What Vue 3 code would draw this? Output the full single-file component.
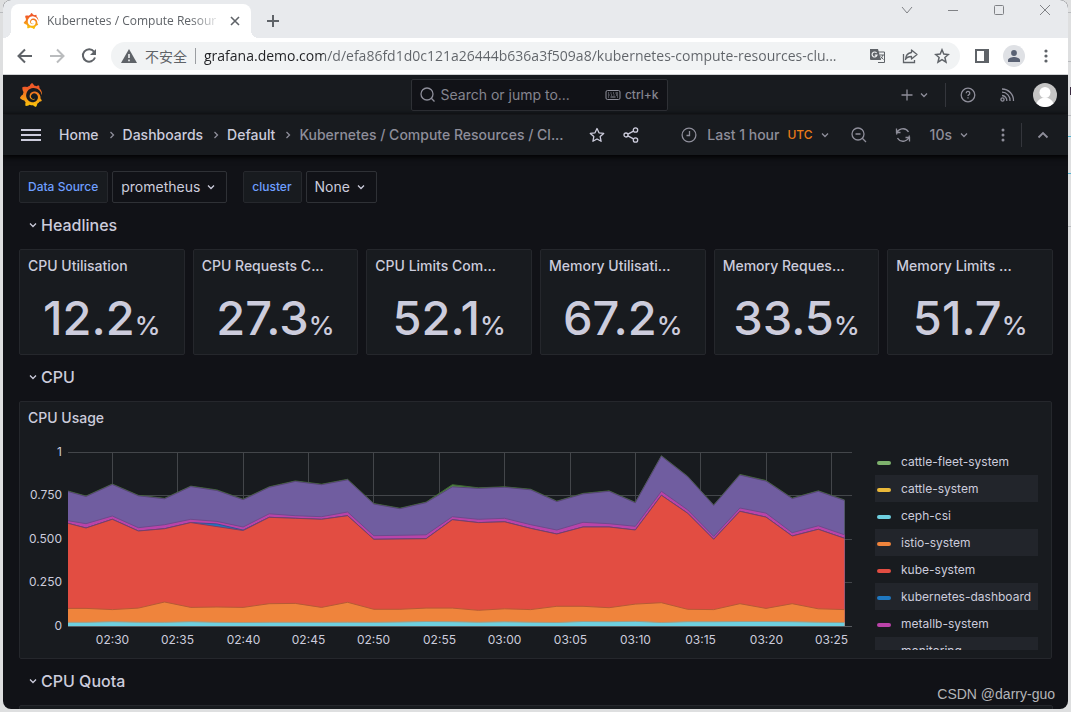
<script setup>
const logo =
  'M23.02 10.59a8.578 8.578 0 0 0-.862-3.034 8.911 8.911 0 0 0-1.789-2.445c.337-1.342-.413-2.505-.413-2.505-1.292-.08-2.113.4-2.416.62-.052-.02-.102-.044-.154-.064-.22-.089-.446-.172-.677-.247-.231-.073-.47-.14-.711-.197a9.867 9.867 0 0 0-.875-.161C14.557.753 12.94 0 12.94 0c-1.804 1.145-2.147 2.744-2.147 2.744l-.018.093c-.098.029-.2.057-.298.088-.138.042-.275.094-.413.143-.138.055-.275.107-.41.166a8.869 8.869 0 0 0-1.557.87l-.063-.029c-2.497-.955-4.716.195-4.716.195-.203 2.658.996 4.33 1.235 4.636a11.608 11.608 0 0 0-.607 2.635C1.636 12.677.953 15.014.953 15.014c1.926 2.214 4.171 2.351 4.171 2.351.003-.002.006-.002.006-.005.285.509.615.994.986 1.446.156.19.32.371.488.548-.704 2.009.099 3.68.099 3.68 2.144.08 3.553-.937 3.849-1.173a9.784 9.784 0 0 0 3.164.501h.08l.055-.003.107-.002.103-.005.003.002c1.01 1.44 2.788 1.646 2.788 1.646 1.264-1.332 1.337-2.653 1.337-2.94v-.058c0-.02-.003-.039-.003-.06.265-.187.52-.387.758-.6a7.875 7.875 0 0 0 1.415-1.7c1.43.083 2.437-.885 2.437-.885-.236-1.49-1.085-2.216-1.264-2.354l-.018-.013-.016-.013a.217.217 0 0 1-.031-.02c.008-.092.016-.18.02-.27.011-.162.016-.323.016-.48v-.253l-.005-.098-.008-.135a1.891 1.891 0 0 0-.01-.13c-.003-.042-.008-.083-.013-.125l-.016-.124-.018-.122a6.215 6.215 0 0 0-2.032-3.73 6.015 6.015 0 0 0-3.222-1.46 6.292 6.292 0 0 0-.85-.048l-.107.002h-.063l-.044.003-.104.008a4.777 4.777 0 0 0-3.335 1.695c-.332.4-.592.84-.768 1.297a4.594 4.594 0 0 0-.312 1.817l.003.091c.005.055.007.11.013.164a3.615 3.615 0 0 0 .698 1.82 3.53 3.53 0 0 0 1.827 1.282c.33.098.66.14.971.137.039 0 .078 0 .114-.002l.063-.003c.02 0 .041-.003.062-.003.034-.002.065-.007.099-.01.007 0 .018-.003.028-.003l.031-.005.06-.008a1.18 1.18 0 0 0 .112-.02c.036-.008.072-.013.109-.024a2.634 2.634 0 0 0 .914-.415c.028-.02.056-.041.085-.065a.248.248 0 0 0 .039-.35.244.244 0 0 0-.309-.06l-.078.042c-.09.044-.184.083-.283.116a2.476 2.476 0 0 1-.475.096c-.028.003-.054.006-.083.006l-.083.002c-.026 0-.054 0-.08-.002l-.102-.006h-.012l-.024.006c-.016-.003-.031-.003-.044-.006-.031-.002-.06-.007-.091-.01a2.59 2.59 0 0 1-.724-.213 2.557 2.557 0 0 1-.667-.438 2.52 2.52 0 0 1-.805-1.475 2.306 2.306 0 0 1-.029-.444l.006-.122v-.023l.002-.031c.003-.021.003-.04.005-.06a3.163 3.163 0 0 1 1.352-2.29 3.12 3.12 0 0 1 .937-.43 2.946 2.946 0 0 1 .776-.101h.06l.07.002.045.003h.026l.07.005a4.041 4.041 0 0 1 1.635.49 3.94 3.94 0 0 1 1.602 1.662 3.77 3.77 0 0 1 .397 1.414l.005.076.003.075c.002.026.002.05.002.075 0 .024.003.052 0 .07v.065l-.002.073-.008.174a6.195 6.195 0 0 1-.08.639 5.1 5.1 0 0 1-.267.927 5.31 5.31 0 0 1-.624 1.13 5.052 5.052 0 0 1-3.237 2.014 4.82 4.82 0 0 1-.649.066l-.039.003h-.287a6.607 6.607 0 0 1-1.716-.265 6.776 6.776 0 0 1-3.4-2.274 6.75 6.75 0 0 1-.746-1.15 6.616 6.616 0 0 1-.714-2.596l-.005-.083-.002-.02v-.056l-.003-.073v-.096l-.003-.104v-.07l.003-.163c.008-.22.026-.45.054-.678a8.707 8.707 0 0 1 .28-1.355c.128-.444.286-.872.473-1.277a7.04 7.04 0 0 1 1.456-2.1 5.925 5.925 0 0 1 .953-.763c.169-.111.343-.213.524-.306.089-.05.182-.091.273-.135.047-.02.093-.042.138-.062a7.177 7.177 0 0 1 .714-.267l.145-.045c.049-.015.098-.026.148-.041.098-.029.197-.052.296-.076.049-.013.1-.02.15-.033l.15-.032.151-.028.076-.013.075-.01.153-.024c.057-.01.114-.013.171-.023l.169-.021c.036-.003.073-.008.106-.01l.073-.008.036-.003.042-.002c.057-.003.114-.008.171-.01l.086-.006h.023l.037-.003.145-.007a7.999 7.999 0 0 1 1.708.125 7.917 7.917 0 0 1 2.048.68 8.253 8.253 0 0 1 1.672 1.09l.09.077.089.078c.06.052.114.107.171.159.057.052.112.106.166.16.052.055.107.107.159.164a8.671 8.671 0 0 1 1.41 1.978c.012.026.028.052.04.078l.04.078.075.156c.023.051.05.1.07.153l.065.15a8.848 8.848 0 0 1 .45 1.34.19.19 0 0 0 .201.142.186.186 0 0 0 .172-.184c.01-.246.002-.532-.024-.856z'

const stats = [
  { title: 'CPU Utilisation', value: '12.2' },
  { title: 'CPU Requests C...', value: '27.3' },
  { title: 'CPU Limits Com...', value: '52.1' },
  { title: 'Memory Utilisati...', value: '67.2' },
  { title: 'Memory Reques...', value: '33.5' },
  { title: 'Memory Limits ...', value: '51.7' },
]

const legend = [
  { name: 'cattle-fleet-system', color: '#7eb26d' },
  { name: 'cattle-system', color: '#eab839' },
  { name: 'ceph-csi', color: '#6ed0e0' },
  { name: 'istio-system', color: '#ef843c' },
  { name: 'kube-system', color: '#e24d42' },
  { name: 'kubernetes-dashboard', color: '#1f78c1' },
  { name: 'metallb-system', color: '#ba43a9' },
  { name: 'monitoring', color: '#705da0' },
]

// Chart geometry, in viewBox units
const left = 44
const base = 186
const unit = 174
const xs = [44, 62]
for (let i = 0; i < 29; i++) xs.push(88.3 + i * 26.15)

// Stacked tops, one value for each sample
const tops = {
  monitoring: [0.773, 0.744, 0.813, 0.748, 0.731, 0.801, 0.779, 0.726, 0.797, 0.831, 0.812, 0.84, 0.701, 0.674, 0.709, 0.8, 0.791, 0.797, 0.783, 0.715, 0.759, 0.774, 0.708, 0.976, 0.858, 0.693, 0.868, 0.833, 0.732, 0.774, 0.722],
  metallb: [0.605, 0.588, 0.632, 0.565, 0.582, 0.613, 0.601, 0.569, 0.645, 0.634, 0.628, 0.655, 0.519, 0.521, 0.524, 0.628, 0.613, 0.619, 0.582, 0.552, 0.596, 0.588, 0.573, 0.774, 0.668, 0.515, 0.678, 0.649, 0.536, 0.576, 0.524],
  dashboard: [0.59, 0.563, 0.613, 0.546, 0.559, 0.594, 0.587, 0.551, 0.625, 0.619, 0.613, 0.634, 0.498, 0.5, 0.502, 0.611, 0.594, 0.599, 0.561, 0.529, 0.569, 0.569, 0.552, 0.751, 0.648, 0.498, 0.659, 0.626, 0.517, 0.556, 0.504],
  kube: [0.59, 0.563, 0.613, 0.546, 0.559, 0.594, 0.571, 0.549, 0.625, 0.619, 0.613, 0.634, 0.498, 0.5, 0.502, 0.611, 0.594, 0.599, 0.561, 0.529, 0.569, 0.569, 0.552, 0.751, 0.648, 0.498, 0.659, 0.626, 0.517, 0.556, 0.504],
  istio: [0.101, 0.101, 0.094, 0.103, 0.138, 0.107, 0.109, 0.107, 0.128, 0.13, 0.107, 0.136, 0.096, 0.096, 0.103, 0.103, 0.09, 0.099, 0.094, 0.113, 0.113, 0.105, 0.126, 0.134, 0.096, 0.094, 0.128, 0.101, 0.128, 0.099, 0.094],
  ceph: [0.021, 0.021, 0.025, 0.022, 0.021, 0.025, 0.021, 0.02, 0.021, 0.021, 0.021, 0.022, 0.021, 0.023, 0.026, 0.025, 0.022, 0.024, 0.022, 0.02, 0.026, 0.025, 0.027, 0.02, 0.025, 0.025, 0.026, 0.026, 0.025, 0.022, 0.02],
}
tops.fleet = tops.monitoring.map((v, i) => v + (i === 15 ? 0.012 : 0.003))

const layers = [
  { key: 'fleet', fill: '#508642', line: '#3f6833' },
  { key: 'monitoring', fill: '#705da0', line: '#584477' },
  { key: 'metallb', fill: '#ba43a9', line: '#6d4a8c' },
  { key: 'dashboard', fill: '#1f78c1', line: '#3c4f92' },
  { key: 'kube', fill: '#e24d42', line: '#7b3d68' },
  { key: 'istio', fill: '#ef843c', line: '#b65a35' },
  { key: 'ceph', fill: '#6ed0e0', line: '#a59a80' },
].map((l) => {
  const pts = tops[l.key].map((v, i) => `${xs[i].toFixed(1)},${(base - v * unit).toFixed(1)}`).join(' ')
  return { ...l, pts, area: `${left},${base} ${pts} ${xs[30].toFixed(1)},${base}` }
})

const yTicks = [
  { label: '1', y: 12.5 },
  { label: '0.750', y: 55.5 },
  { label: '0.500', y: 99.5 },
  { label: '0.250', y: 142.5 },
  { label: '0', y: 186.5 },
]
const xTicks = ['02:30', '02:35', '02:40', '02:45', '02:50', '02:55', '03:00', '03:05', '03:10', '03:15', '03:20', '03:25'].map(
  (label, i) => ({ label, x: Math.floor(88.3 + i * 65.4) + 0.5 }),
)
</script>

<template>
  <div class="desktop">
    <div class="window">
      <header class="tabstrip">
        <div class="tab">
          <svg class="favicon" viewBox="0 0 24 24"><path :d="logo" fill="url(#brand)" /></svg>
          <span class="tab-title">Kubernetes / Compute Resour</span>
          <button class="plain" aria-label="Close tab">
            <svg width="10" height="10" viewBox="0 0 10 10" stroke="#5f6368" stroke-width="1.6"><path d="M1 1l8 8M9 1l-8 8" /></svg>
          </button>
        </div>
        <button class="plain newtab" aria-label="New tab">
          <svg width="12" height="12" viewBox="0 0 12 12" stroke="#5f6368" stroke-width="2"><path d="M6 0v12M0 6h12" /></svg>
        </button>
        <div class="winctl">
          <button class="plain" aria-label="Search tabs"><svg width="12" height="12" viewBox="0 0 12 12"><path d="M1 3l5 6 5-6" /></svg></button>
          <button class="plain" aria-label="Minimize"><svg width="12" height="12" viewBox="0 0 12 12"><path d="M1 6.500h10" /></svg></button>
          <button class="plain" aria-label="Maximize"><svg width="12" height="12" viewBox="0 0 12 12"><rect x="1.500" y="1.500" width="9" height="9" rx="1" /></svg></button>
          <button class="plain" aria-label="Close"><svg width="12" height="12" viewBox="0 0 12 12"><path d="M1 1l10 10M11 1L1 11" /></svg></button>
        </div>
      </header>

      <div class="toolbar">
        <button class="plain" aria-label="Back">
          <svg width="16" height="16" viewBox="0 0 16 16" fill="none" stroke="#5f6368" stroke-width="2"><path d="M15 8H2M8 1.500L1.500 8 8 14.500" /></svg>
        </button>
        <button class="plain" aria-label="Forward">
          <svg width="16" height="16" viewBox="0 0 16 16" fill="none" stroke="#babcbe" stroke-width="2"><path d="M1 8h13M8 1.500L14.500 8 8 14.500" /></svg>
        </button>
        <button class="plain" aria-label="Reload">
          <svg width="16" height="16" viewBox="0 0 16 16"><path d="M13 3.600A6.200 6.200 0 1 0 14 9.500" fill="none" stroke="#5f6368" stroke-width="2" /><path d="M15 1v6H9z" fill="#5f6368" /></svg>
        </button>
        <div class="omnibox">
          <svg width="16" height="14" viewBox="0 0 16 14"><path d="M8 0l8 14H0z" fill="#5f6368" /><path d="M8 5v4M8 10.500v1.800" stroke="#f1f3f4" stroke-width="1.600" /></svg>
          <span class="insecure">不安全</span>
          <input class="url" aria-label="Address" value="grafana.demo.com/d/efa86fd1d0c121a26444b636a3f509a8/kubernetes-compute-resources-clu..." />
          <button class="plain" aria-label="Translate">
            <svg width="16" height="16" viewBox="0 0 16 16"><path d="M6 4h8.500v10.500H8" fill="none" stroke="#5f6368" /><path d="M0 1h8l3 11H1a1 1 0 0 1-1-1z" fill="#5f6368" /><path d="M6.600 5A2.500 2.500 0 1 0 7 7.200H4.800" fill="none" stroke="#f1f3f4" stroke-width="1.200" /><path d="M9.500 7h4.500M12.800 7c-.4 2-1.500 3.300-2.600 4.200M10.500 8.500l3 3" fill="none" stroke="#5f6368" /></svg>
          </button>
          <button class="plain" aria-label="Share page">
            <svg width="16" height="16" viewBox="0 0 16 16" fill="none" stroke="#5f6368" stroke-width="1.300"><path d="M1.500 6v8.500h11V12" /><path d="M9.500 2l5.500 4.500L9.500 11V8.500c-3 0-5 .8-6 3 .2-3.500 2-6.500 6-7z" stroke-linejoin="round" /></svg>
          </button>
          <button class="plain" aria-label="Bookmark">
            <svg width="16" height="16" viewBox="0 0 16 16" fill="none" stroke="#5f6368" stroke-width="1.500"><path d="M8 1.800l1.800 4.300 4.600.4-3.500 3 1.100 4.600L8 11.700 4 14.100l1.100-4.600-3.500-3 4.600-.4z" /></svg>
          </button>
        </div>
        <button class="plain panelbtn" aria-label="Side panel">
          <svg width="14" height="14" viewBox="0 0 14 14"><path d="M0 0h14v14H0zM2 2v10h7V2z" fill="#5f6368" fill-rule="evenodd" /></svg>
        </button>
        <button class="plain profile" aria-label="Profile">
          <svg width="12" height="12" viewBox="0 0 12 12" fill="#5a6274"><circle cx="6" cy="3" r="2.900" /><path d="M0 12V10c0-2 4-3 6-3s6 1 6 3v2z" /></svg>
        </button>
        <button class="plain" aria-label="Browser menu">
          <svg width="4" height="14" viewBox="0 0 4 14" fill="#5f6368"><circle cx="2" cy="2" r="1.600" /><circle cx="2" cy="7" r="1.600" /><circle cx="2" cy="12" r="1.600" /></svg>
        </button>
      </div>

      <div class="app">
        <div class="topbar">
          <a href="#" class="brand" aria-label="Grafana">
            <svg width="24" height="24" viewBox="0 0 24 24">
              <defs><linearGradient id="brand" x1="0" y1="0" x2="0" y2="1"><stop offset="0.200" stop-color="#f05a28" /><stop offset="1" stop-color="#fbca0a" /></linearGradient></defs>
              <path :d="logo" fill="url(#brand)" />
            </svg>
          </a>
          <div class="search">
            <svg class="ic" width="16" height="16" viewBox="0 0 16 16"><circle cx="7" cy="7" r="6" /><path d="M11.300 11.300L14.500 14.500" /></svg>
            <input aria-label="Search" placeholder="Search or jump to..." />
            <svg class="ic kbd" width="16" height="16" viewBox="0 0 16 16"><rect x="1" y="3.500" width="14" height="9" rx="1.500" /><path d="M3 6h1M5.500 6h1M8 6h1M10.500 6h2.500M3 8h1.500M6 8h1M8.500 8h1M11 8h2M3 10h1M5.500 10h5M12 10h1" /></svg>
            <kbd>ctrl+k</kbd>
          </div>
          <div class="top-actions">
            <button class="plain add" aria-label="New">
              <svg class="ic" width="12" height="12" viewBox="0 0 12 12"><path d="M6 0.500v11M0.500 6h11" /></svg>
              <svg class="ic" width="8" height="6" viewBox="0 0 8 6"><path d="M1 1.500l3 3 3-3" /></svg>
            </button>
            <i class="divider"></i>
            <button class="plain help" aria-label="Help">
              <svg class="ic" width="16" height="16" viewBox="0 0 16 16"><circle cx="8" cy="8" r="6.800" /><path d="M6.200 6.200a1.800 1.800 0 1 1 2.500 1.700c-.5.200-.7.500-.7 1.100M8 10.300v1.300" /></svg>
            </button>
            <button class="plain news" aria-label="News">
              <svg class="ic" width="16" height="16" viewBox="0 0 16 16"><circle cx="3.500" cy="12.500" r="1.600" /><path d="M3 8.500a5 5 0 0 1 4.800 5.500M3 5.200A8 8 0 0 1 11 14M3 2a11.500 11.500 0 0 1 11.500 12" /></svg>
            </button>
            <button class="plain avatar" aria-label="Account">
              <svg width="24" height="24" viewBox="0 0 24 24"><circle cx="12" cy="12" r="12" fill="#c5c5c5" /><circle cx="12" cy="9.500" r="5.500" fill="#fff" /><path d="M3.500 20.500c1-3.500 4-5 6-5.500h5c2 .5 5 2 6 5.500A12 12 0 0 1 3.500 20.500z" fill="#fff" /></svg>
            </button>
          </div>
        </div>

        <div class="navbar">
          <button class="plain" aria-label="Menu">
            <svg width="20" height="12" viewBox="0 0 20 12" fill="#ccccdc"><path d="M0 0h20v2H0zM0 5h20v2H0zM0 10h20v2H0z" /></svg>
          </button>
          <nav class="crumbs">
            <template v-for="c in ['Home', 'Dashboards', 'Default']" :key="c">
              <a href="#">{{ c }}</a>
              <svg class="ic" width="6" height="8" viewBox="0 0 6 8"><path d="M1.500 1l3 3-3 3" /></svg>
            </template>
            <span class="current">Kubernetes / Compute Resources / Cl...</span>
          </nav>
          <button class="plain light star" aria-label="Favorite">
            <svg class="ic" width="16" height="16" viewBox="0 0 16 16"><path d="M8 1.500l2 4.300 4.700.600-3.500 3.200.900 4.700L8 12l-4.100 2.300.900-4.700L1.300 6.400 6 5.800z" stroke-linejoin="round" /></svg>
          </button>
          <button class="plain light" aria-label="Share">
            <svg class="ic" width="16" height="16" viewBox="0 0 16 16"><circle cx="3" cy="8" r="2" /><circle cx="12.500" cy="3" r="2.200" /><circle cx="12.500" cy="13" r="2.200" /><path d="M4.900 7.100l5.600-3M4.900 8.900l5.600 3" /></svg>
          </button>
          <div class="controls">
            <button class="plain range">
              <svg class="ic" width="16" height="16" viewBox="0 0 16 16"><circle cx="8" cy="8" r="6.900" /><path d="M8.500 4v4.500H5.500" /></svg>
              <span class="gap">Last 1 hour</span><span class="utc">UTC</span>
              <svg class="ic" width="8" height="6" viewBox="0 0 8 6"><path d="M1 1.500l3 3 3-3" /></svg>
            </button>
            <button class="plain" aria-label="Zoom out">
              <svg class="ic" width="16" height="16" viewBox="0 0 16 16"><circle cx="7" cy="7" r="6" /><path d="M4.500 7h5M11.300 11.300L15 15" /></svg>
            </button>
            <button class="plain refresh" aria-label="Refresh">
              <svg class="ic" width="16" height="16" viewBox="0 0 16 16"><path d="M1.500 1.500v4H5.500M1.600 7.500A6.400 6.400 0 0 1 13.500 5M14.500 14.500v-4H10.500M14.400 8.500A6.400 6.400 0 0 1 2.500 11M1.700 5.300A6.400 6.400 0 0 1 4 3" /></svg>
            </button>
            <button class="plain interval">10s
              <svg class="ic" width="8" height="6" viewBox="0 0 8 6"><path d="M1 1.500l3 3 3-3" /></svg>
            </button>
            <button class="plain" aria-label="More">
              <svg width="4" height="14" viewBox="0 0 4 14" fill="#8e8e9a"><circle cx="2" cy="2" r="1.500" /><circle cx="2" cy="7" r="1.500" /><circle cx="2" cy="12" r="1.500" /></svg>
            </button>
            <i class="divider"></i>
            <button class="plain" aria-label="Collapse toolbar">
              <svg class="ic up" width="12" height="8" viewBox="0 0 12 8"><path d="M1.500 6.500L6 2l4.500 4.500" /></svg>
            </button>
          </div>
        </div>

        <main>
          <div class="variables">
            <label for="ds">Data Source</label>
            <div class="pick">
              <select id="ds"><option>prometheus</option></select>
              <svg class="ic" width="8" height="6" viewBox="0 0 8 6"><path d="M1 1.500l3 3 3-3" /></svg>
            </div>
            <label for="cl" class="second">cluster</label>
            <div class="pick">
              <select id="cl"><option>None</option></select>
              <svg class="ic" width="8" height="6" viewBox="0 0 8 6"><path d="M1 1.500l3 3 3-3" /></svg>
            </div>
          </div>

          <button class="plain row"><svg class="ic" width="8" height="6" viewBox="0 0 8 6"><path d="M1 1.500l3 3 3-3" /></svg>Headlines</button>
          <section class="stats">
            <article v-for="s in stats" :key="s.title" class="panel stat">
              <h2>{{ s.title }}</h2>
              <p>{{ s.value }}<small>%</small></p>
            </article>
          </section>

          <button class="plain row"><svg class="ic" width="8" height="6" viewBox="0 0 8 6"><path d="M1 1.500l3 3 3-3" /></svg>CPU</button>
          <section class="panel usage">
            <h2>CPU Usage</h2>
            <div class="usage-body">
              <svg class="chart" viewBox="0 0 832 210">
                <g stroke="#43464a">
                  <path v-for="t in yTicks" :key="t.label" :d="`M${left} ${t.y}H828`" />
                  <path v-for="t in xTicks" :key="t.label" :d="`M${t.x} 12V187`" />
                </g>
                <g v-for="l in layers" :key="l.key">
                  <polygon :points="l.area" :fill="l.fill" />
                  <polyline :points="l.pts" fill="none" :stroke="l.line" />
                </g>
                <path d="M44 186.500H828" stroke="#585c60" />
                <text v-for="t in yTicks" :key="t.label" x="38" :y="t.y + 3.500" text-anchor="end">{{ t.label }}</text>
                <text v-for="t in xTicks" :key="t.label" :x="t.x" y="204" text-anchor="middle">{{ t.label }}</text>
              </svg>
              <ul class="legend">
                <li v-for="l in legend" :key="l.name">
                  <svg width="14" height="6" viewBox="0 0 14 6"><rect y="2" width="14" height="4" rx="2" :fill="l.color" /></svg>
                  <button class="plain">{{ l.name }}</button>
                </li>
              </ul>
            </div>
          </section>

          <button class="plain row"><svg class="ic" width="8" height="6" viewBox="0 0 8 6"><path d="M1 1.500l3 3 3-3" /></svg>CPU Quota</button>
          <section class="panel quota"></section>
        </main>
      </div>
    </div>
    <div class="watermark">CSDN @darry-guo</div>
  </div>
</template>

<style>
body {
  background: #dedfe0;
  overflow: hidden;
}
</style>

<style scoped>
* {
  box-sizing: border-box;
}
.desktop {
  position: relative;
  height: 100vh;
  padding: 0 3px 3px;
  /* Edges of the page behind the window */
  background:
    linear-gradient(#b9bbbe, #b9bbbe) right 61px / 3px 1px no-repeat,
    linear-gradient(#3a2a40, #3a2a40) right 87px / 1px 8px no-repeat,
    linear-gradient(#b9bbbe, #b9bbbe) right 115px / 3px 1px no-repeat,
    linear-gradient(#4fb3d0, #4fb3d0) right 136px / 3px 1px no-repeat,
    linear-gradient(#4fb3d0, #4fb3d0) right 173px / 3px 1px no-repeat,
    linear-gradient(#b9bbbe, #b9bbbe) right 226px / 3px 1px no-repeat,
    linear-gradient(#b9bbbe, #b9bbbe) 0 12px / 100% 1px no-repeat;
  font-family: Inter, "Noto Sans CJK SC", sans-serif;
  font-size: 14px;
}
.window {
  display: flex;
  flex-direction: column;
  height: 100%;
  overflow: hidden;
  border-radius: 8px;
  background: #111217;
}
.plain {
  display: inline-flex;
  align-items: center;
  flex: none;
  padding: 0;
  border: 0;
  background: none;
  color: inherit;
  font: inherit;
}
svg {
  display: block;
  flex: none;
}

.tabstrip {
  display: flex;
  flex: none;
  height: 38px;
  padding-left: 8px;
  background: #e8eaed;
}
.tab {
  position: relative;
  display: flex;
  align-items: center;
  width: 240px;
  height: 34px;
  margin-top: 4px;
  padding: 0 11px 0 12px;
  border-radius: 8px 8px 0 0;
  background: #fff;
}
.tab::before,
.tab::after {
  content: "";
  position: absolute;
  bottom: 0;
  width: 8px;
  height: 8px;
}
.tab::before {
  right: 100%;
  background: radial-gradient(circle at 0 0, transparent 8px, #fff 8px);
}
.tab::after {
  left: 100%;
  background: radial-gradient(circle at 100% 0, transparent 8px, #fff 8px);
}
.favicon {
  width: 16px;
  height: 16px;
}
.tab-title {
  flex: 1;
  min-width: 0;
  margin: 0 8px;
  overflow: hidden;
  color: #5f6368;
  font: 12px/20px "Open Sans", sans-serif;
  white-space: nowrap;
  mask-image: linear-gradient(90deg, #000 82%, transparent);
}
.newtab {
  margin-left: 16px;
  padding-top: 4px;
}
.winctl {
  display: flex;
  gap: 34px;
  height: 20px;
  margin-left: auto;
  padding-right: 17px;
  fill: none;
  stroke: #808286;
}

.toolbar {
  display: flex;
  align-items: center;
  flex: none;
  gap: 16px;
  height: 37px;
  padding: 0 20px 0 14px;
  border-bottom: 1px solid #d0d2d4;
  background: #fff;
}
.omnibox {
  display: flex;
  align-items: center;
  flex: 1;
  min-width: 0;
  gap: 16px;
  height: 28px;
  margin-left: -2px;
  padding: 0 10px;
  border-radius: 14px;
  background: #f1f3f4;
}
.insecure {
  margin: 0 -8px;
  padding-right: 8px;
  border-right: 1px solid #9a9da1;
  color: #5f6368;
  font: 14px/16px "Noto Sans CJK SC", sans-serif;
}
.url {
  flex: 1;
  min-width: 0;
  padding: 0;
  border: 0;
  outline: 0;
  background: linear-gradient(90deg, #202124 120px, #5f6368 120px);
  background-clip: text;
  color: transparent;
  font: 14px/22px "Open Sans", sans-serif;
}
.panelbtn {
  margin-left: -1px;
}
.profile {
  justify-content: center;
  width: 22px;
  height: 22px;
  margin: 0 3px 0 -2px;
  border-radius: 50%;
  background: #dfe1e5;
}

.app {
  color: #ccccdc;
}
.ic {
  fill: none;
  stroke: #8e8e9a;
  stroke-width: 1.3;
}
.light .ic {
  stroke: #ccccdc;
}
.topbar {
  display: grid;
  grid-template-columns: 1fr 257px 1fr;
  align-items: center;
  height: 40px;
  padding: 0 11px 0 18px;
  border-bottom: 1px solid #26282d;
  background: #181b1f;
}
.brand {
  width: 24px;
  margin-left: -2px;
}
.search {
  display: flex;
  align-items: center;
  height: 32px;
  padding: 0 8px;
  border: 1px solid #2f3136;
  border-radius: 2px;
  background: #111217;
}
.search input {
  flex: 1;
  min-width: 0;
  padding: 0 0 0 5px;
  border: 0;
  outline: 0;
  background: none;
  color: #ccccdc;
  font: 14px/22px Inter, sans-serif;
}
.search input::placeholder {
  color: #85858f;
  opacity: 1;
}
.kbd {
  stroke-width: 1;
}
kbd {
  padding-left: 4px;
  color: #85858f;
  font: 500 12px/18px Inter, sans-serif;
}
.top-actions {
  display: flex;
  align-items: center;
  justify-content: flex-end;
}
.add {
  gap: 7px;
  margin-right: 17px;
}
.divider {
  width: 1px;
  height: 24px;
  background: #34363c;
}
.help {
  margin: 0 23px 0 14px;
}
.news {
  margin-right: 18px;
}

.navbar {
  display: flex;
  align-items: center;
  height: 40px;
  padding: 0 19px 0 18px;
  background: #181b1f;
  box-shadow: 0 1px 6px 1px #000;
  position: relative;
  line-height: 18px;
}
.crumbs {
  display: flex;
  align-items: center;
  gap: 10px;
  flex: 0 1 508px;
  min-width: 0;
  margin-left: 18px;
  font-weight: 500;
}
.crumbs a {
  color: #ccccdc;
  text-decoration: none;
}
.crumbs .ic {
  margin-right: -2px;
}
.current {
  overflow: hidden;
  color: #8e8e9a;
  text-overflow: ellipsis;
  white-space: nowrap;
}
.star {
  margin: 0 18px 0 22px;
}
.controls {
  display: flex;
  align-items: center;
  margin-left: auto;
  color: #8e8e9a;
  font-weight: 500;
}
.controls .divider {
  margin: 0 15px 0 16px;
}
.gap {
  margin: 0 8px 0 10px;
}
.utc {
  margin-right: 8px;
  color: #eb7b18;
  font-size: 12px;
}
.range {
  margin-right: 22px;
}
.refresh {
  margin: 0 19px 0 28px;
}
.interval {
  gap: 8px;
  margin-right: 33px;
}
.up {
  stroke-width: 1.8;
}

main {
  padding: 16px 15px 0 16px;
}
.variables {
  display: flex;
  height: 32px;
}
.variables label {
  padding: 0 9px 0 8px;
  border: 1px solid #26282d;
  border-radius: 2px;
  background: #181b1f;
  color: #6e9fff;
  font-size: 12px;
  font-weight: 500;
  line-height: 30px;
}
.variables .second {
  margin-left: 16px;
}
.pick {
  display: flex;
  align-items: center;
  margin-left: 4px;
  padding: 0 11px 0 8px;
  border: 1px solid #2f3136;
  border-radius: 2px;
}
.pick select {
  margin-right: 6px;
  padding: 0;
  border: 0;
  outline: 0;
  appearance: none;
  background: none;
  color: #ccccdc;
  font: 14px/22px Inter, sans-serif;
}
.pick .ic,
.row .ic {
  stroke: #ccccdc;
}
.row {
  display: flex;
  gap: 4px;
  height: 24px;
  margin: 10px 0 12px 10px;
  font-size: 16px;
  font-weight: 500;
}
.panel {
  border: 1px solid #25272c;
  border-radius: 2px;
  background: #181b1f;
}
h2 {
  margin: 0;
  font-size: 14px;
  font-weight: 500;
  line-height: 32px;
  padding: 0 8px;
}
.stats {
  display: grid;
  grid-template-columns: repeat(6, minmax(0, 1fr));
  gap: 8px;
}
.stat {
  height: 106px;
}
.stat h2 {
  overflow: hidden;
  text-overflow: ellipsis;
  white-space: nowrap;
}
.stat p {
  margin: 6px 0 0;
  font-size: 47px;
  font-weight: 500;
  line-height: 60px;
  text-align: center;
}
.stat small {
  font-size: 26px;
}
.usage {
  height: 258px;
  margin-right: 1px;
}
.usage-body {
  display: flex;
  align-items: flex-start;
  padding: 6px 13px 8px 4px;
}
.chart {
  flex: 1;
  min-width: 0;
}
.chart text {
  fill: #ccccdc;
  font: 12px Inter, sans-serif;
}
.legend {
  width: 163px;
  height: 202px;
  margin: 8px 0 0 19px;
  padding: 0;
  overflow: hidden;
  list-style: none;
}
.legend li {
  display: flex;
  align-items: center;
  gap: 10px;
  height: 27px;
  padding-left: 2px;
  font-size: 12px;
}
.legend li:nth-child(even) {
  background: #22252b;
}
.quota {
  height: 120px;
}
.watermark {
  position: absolute;
  right: 16px;
  bottom: 8px;
  color: #b4b5b8;
  font: 14px/20px "Liberation Sans", sans-serif;
}
</style>
